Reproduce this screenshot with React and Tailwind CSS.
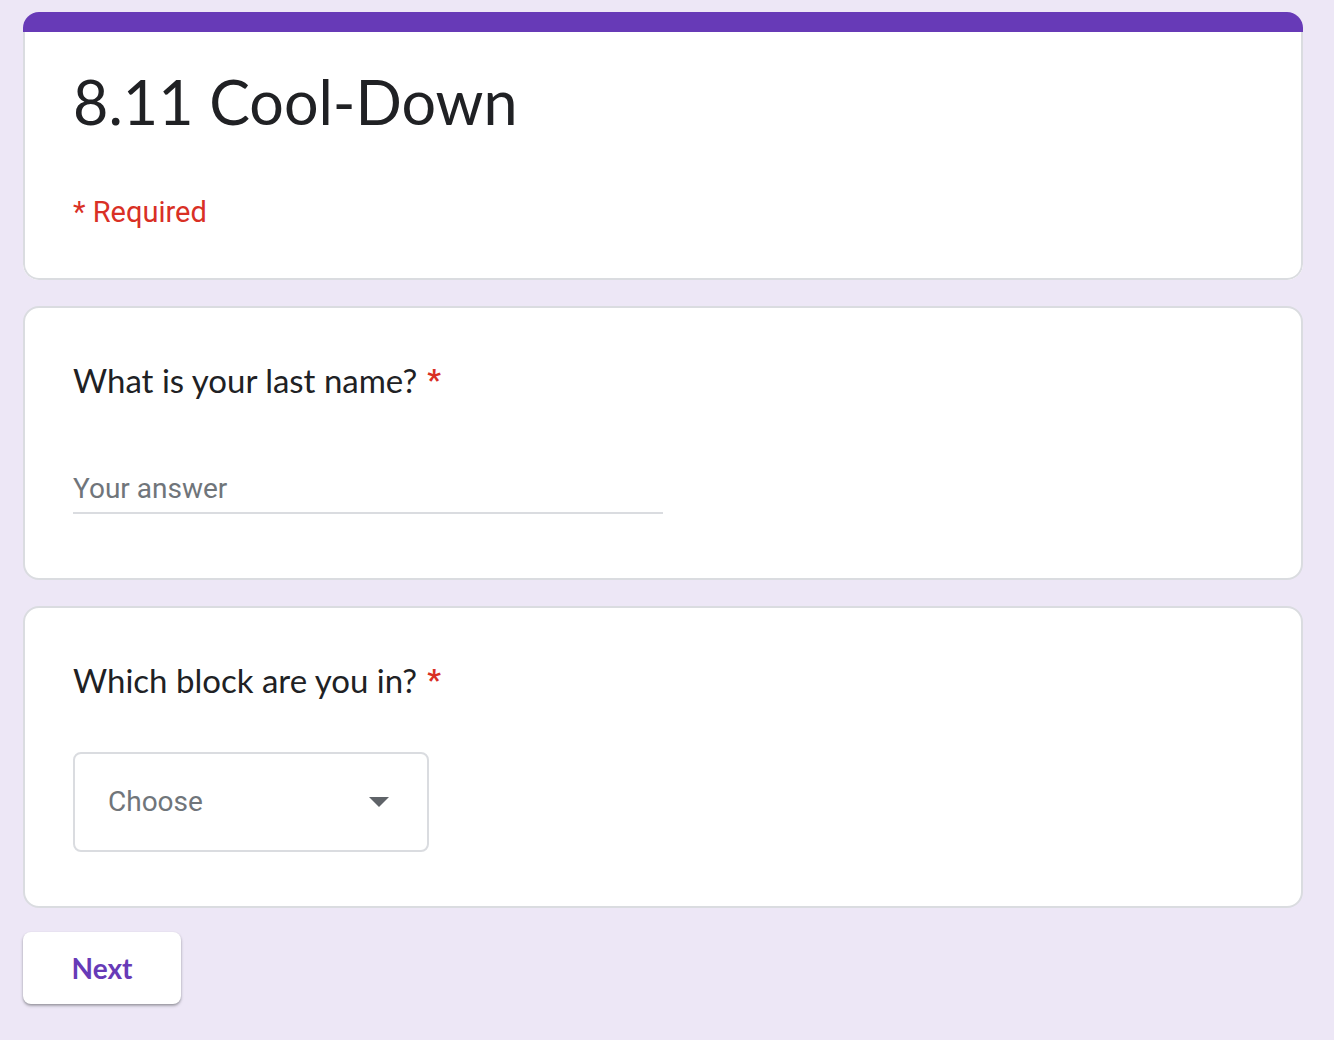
export default function App() {
  const gs = { fontFamily: "Lato, 'Open Sans', sans-serif" };
  return (
    <div className="min-h-[1040px] w-full bg-[#ede7f6] pt-[12px] pl-[23px] pb-8" style={{ fontFamily: "Roboto, Arial, sans-serif" }}>
      <div className="flex w-[1280px] flex-col gap-[26px]">
        {/* Header card */}
        <div className="overflow-hidden rounded-2xl bg-white">
          <div className="h-[20px] bg-[#673ab7]" />
          <div className="rounded-b-2xl border-x-2 border-b-2 border-[#dadce0] px-[48px] pt-[30px] pb-[50px]">
            <h1 className="text-[61px] leading-[80px] text-[#202124]" style={gs}>8.11 Cool-Down</h1>
            <div className="mt-[54px] text-[29px] leading-[32px] text-[#d93025]">* Required</div>
          </div>
        </div>

        {/* Question 1 */}
        <div className="rounded-2xl border-2 border-[#dadce0] bg-white px-[48px] pt-[52px] pb-[64px]">
          <div className="flex items-start text-[33px] leading-[40px] text-[#202124]" style={gs}>
            <span>What is your last name?</span>
            <span className="ml-[10px] text-[30px] font-bold text-[#d93025]" style={{ fontFamily: "Roboto, Arial, sans-serif" }}>*</span>
          </div>
          <div className="mt-[69px] w-[590px] border-b-2 border-[#dadce0] pb-[3px]">
            <span className="block text-[28px] leading-[40px] text-[#70757a]">Your answer</span>
          </div>
        </div>

        {/* Question 2 */}
        <div className="rounded-2xl border-2 border-[#dadce0] bg-white px-[48px] pt-[52px] pb-[54px]">
          <div className="flex items-start text-[33px] leading-[40px] text-[#202124]" style={gs}>
            <span>Which block are you in?</span>
            <span className="ml-[10px] text-[30px] font-bold text-[#d93025]" style={{ fontFamily: "Roboto, Arial, sans-serif" }}>*</span>
          </div>
          <div className="mt-[52px] flex h-[100px] w-[356px] items-center justify-between rounded-lg border-2 border-[#dadce0] pl-[33px] pr-[38px]">
            <span className="text-[28px] text-[#70757a]">Choose</span>
            <svg width="20" height="10" viewBox="0 0 20 10">
              <path d="M0 0 L20 0 L10 10 Z" fill="#5f6368" />
            </svg>
          </div>
        </div>
      </div>

      <button className="mt-[24px] flex h-[72px] w-[158px] items-center justify-center rounded-lg bg-white text-[28px] font-bold text-[#673ab7] shadow-[0_2px_3px_rgba(60,64,67,0.35),0_1px_2px_rgba(60,64,67,0.2)]" style={gs}>
        Next
      </button>
    </div>
  );
}
